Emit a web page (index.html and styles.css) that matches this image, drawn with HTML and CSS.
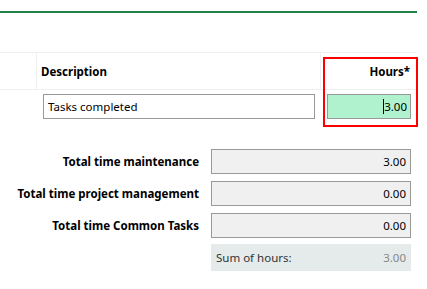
FILE: index.html
```html
<!DOCTYPE html>
<html lang="en">
<head>
    <meta charset="UTF-8">
    <title>Time entry</title>
    <link rel="stylesheet" href="styles.css">
</head>
<body>
    <div class="page">
        <div class="topbar"></div>

        <div class="grid">
            <div class="row head">
                <div class="cell first"></div>
                <div class="cell desc">Description</div>
                <div class="cell hours">Hours*</div>
            </div>
            <div class="row body">
                <div class="cell first"></div>
                <div class="cell desc"><div class="field">Tasks completed</div></div>
                <div class="cell hours"><div class="field active"><span class="caret"></span>3.00</div></div>
            </div>
            <div class="highlight"></div>
        </div>

        <div class="totals">
            <div class="label">Total time maintenance</div>
            <div class="box">3.00</div>
            <div class="label">Total time project management</div>
            <div class="box">0.00</div>
            <div class="label">Total time Common Tasks</div>
            <div class="box">0.00</div>
            <div class="label"></div>
            <div class="sum"><span>Sum of hours:</span><span class="sum-value">3.00</span></div>
        </div>
    </div>
</body>
</html>
```

FILE: styles.css
```css
body {
    margin: 0;
    font-family: "Noto Sans", "Open Sans", sans-serif;
    font-size: 11.5px;
    color: #000;
    background: #fff;
}
.page {
    width: 427px;
    height: 289px;
    overflow: hidden;
}
.topbar {
    width: 417px;
    height: 11px;
    border-bottom: 2px solid #21824a;
    margin-bottom: 39px;
}
.grid {
    position: relative;
    width: 417px;
}
.row {
    display: grid;
    grid-template-columns: 37px 284px 96px;
}
.head {
    height: 36px;
    border-top: 1px solid #f0f0f0;
    border-bottom: 1px solid #f0f0f0;
    font-weight: bold;
}
.head .cell {
    display: flex;
    align-items: center;
    border-right: 1px solid #f0f0f0;
}
.head .cell.hours {
    border-right: none;
}
.head .desc {
    padding-left: 4px;
}
.head .hours {
    justify-content: flex-end;
    padding-right: 7px;
}
.body {
    height: 37px;
}
.body .desc {
    padding: 4px 6px 0 6px;
}
.body .hours {
    padding: 4px 6px 0 6px;
}
.field {
    height: 23px;
    border: 1px solid #999;
    display: flex;
    align-items: center;
    padding: 0 4px;
}
.field.active {
    background: #b0f2cd;
    justify-content: flex-end;
    padding-right: 3px;
}
.caret {
    width: 1px;
    height: 15px;
    background: #000;
}
.highlight {
    position: absolute;
    left: 323px;
    top: 5px;
    width: 91px;
    height: 66px;
    border: 2px solid #f00;
}
.totals {
    display: grid;
    grid-template-columns: 199px 200px;
    column-gap: 12px;
    row-gap: 7px;
    margin-top: 22px;
}
.label {
    font-weight: bold;
    text-align: right;
    display: flex;
    align-items: center;
    justify-content: flex-end;
}
.box {
    height: 23px;
    border: 1px solid #999;
    background: #f0f0f0;
    display: flex;
    align-items: center;
    justify-content: flex-end;
    padding-right: 4px;
}
.sum {
    height: 27px;
    margin-top: -1px;
    background: #e5eaea;
    display: flex;
    align-items: center;
    justify-content: space-between;
    padding: 0 5px 0 5px;
    color: #333;
}
.sum-value {
    color: #888;
}
```
